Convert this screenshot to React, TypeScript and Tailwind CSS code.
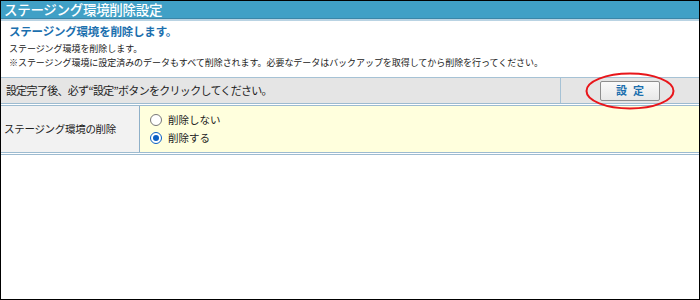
import React from "react";

const jp = { fontFamily: '"Noto Sans CJK JP", "Noto Sans", sans-serif' };

export default function App() {
  return (
    <div className="w-[700px] h-[300px] bg-white border border-black overflow-hidden relative" style={jp}>
      <div className="h-[17px] bg-[#40a0c6] flex items-center pl-[3px]">
        <span className="text-white text-[13.5px] leading-none font-medium tracking-[-0.3px]">ステージング環境削除設定</span>
      </div>
      <div className="h-[1px] bg-[#3a86a8]" />
      <div className="h-[2px] bg-[#b9d3e3]" />
      <div className="pl-[8px] pt-[5px] h-[21px] text-[#1b6fae] text-[11.5px] leading-none font-bold tracking-[-0.2px]">ステージング環境を削除します。</div>
      <div className="pl-[8px] text-[#222] text-[9px] tracking-[-0.05px]">
        <div className="h-[14px] leading-[14px]">ステージング環境を削除します。</div>
        <div className="h-[14px] leading-[14px]">※ステージング環境に設定済みのデータもすべて削除されます。必要なデータはバックアップを取得してから削除を行ってください。</div>
      </div>
      <div className="mt-[7px] border-t border-[#a6c2d5] border-b-[3px] border-b-[#9dbbd0] border-double">
        <div className="h-[25px] bg-[#e5e5e5] flex">
          <div className="flex-1 flex items-center pl-[5px] text-[11px] text-[#222] tracking-[-0.7px]">設定完了後、必ず“設定”ボタンをクリックしてください。</div>
          <div className="w-[139px] border-l border-[#a6c2d5] flex items-center pl-[39px]">
            <button className="w-[60px] h-[20px] border border-[#8e8e8e] rounded-[2px] bg-gradient-to-b from-[#fafafa] to-[#e8e8e8] text-[#1b6fae] text-[11px] font-bold tracking-[6px] pl-[6px] leading-none">設定</button>
          </div>
        </div>
      </div>
      <div className="flex h-[49px] border-b-[3px] border-double border-[#9dbbd0]">
        <div className="w-[139px] bg-[#f2f2f2] border-r border-[#8fb0c8] flex items-center pl-[3px] text-[10.5px] text-[#222] tracking-[-0.3px]">ステージング環境の削除</div>
        <div className="flex-1 bg-[#ffffdd] flex flex-col justify-center pl-[10px] gap-[6px] text-[10.5px] text-[#222]">
          <label className="flex items-center gap-[6px] leading-none">
            <span className="w-[12px] h-[12px] rounded-full border border-[#777] bg-white" />
            削除しない
          </label>
          <label className="flex items-center gap-[6px] leading-none">
            <span className="w-[12px] h-[12px] rounded-full border border-[#0a5fc4] bg-white flex items-center justify-center">
              <span className="w-[6px] h-[6px] rounded-full bg-[#0a5fc4]" />
            </span>
            削除する
          </label>
        </div>
      </div>
      <svg className="absolute left-[583px] top-[70px]" width="92" height="40" viewBox="0 0 92 40">
        <ellipse cx="46" cy="20" rx="43.5" ry="17.5" fill="none" stroke="#e8161b" strokeWidth="2" />
      </svg>
    </div>
  );
}
